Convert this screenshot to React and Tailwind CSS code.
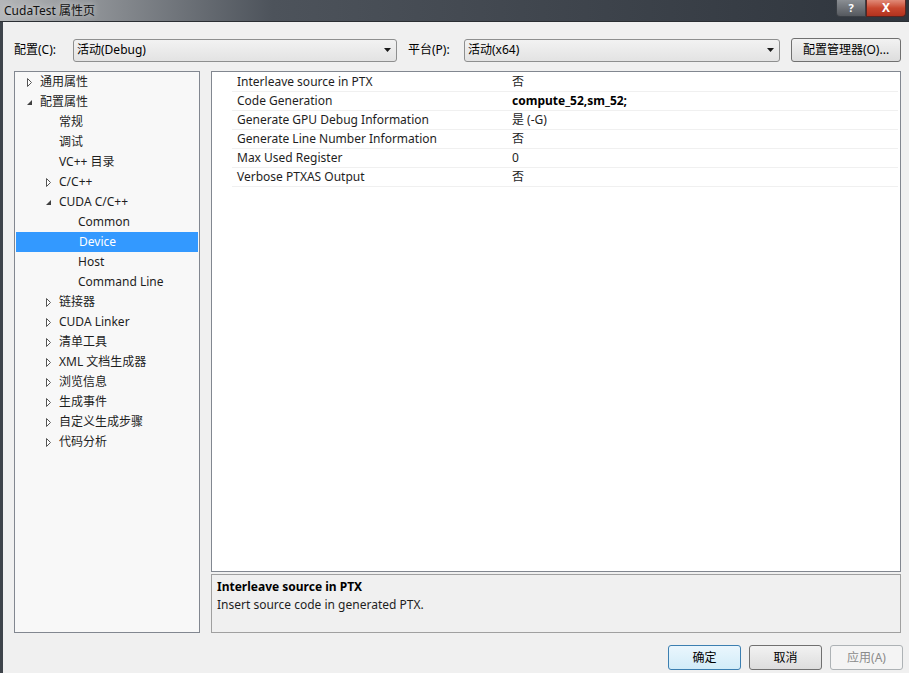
import React from 'react';

const ui = { fontFamily: '"Noto Sans", "Noto Sans CJK SC", sans-serif' };

const tree = [
  { label: '通用属性', level: 0, arrow: 'closed' },
  { label: '配置属性', level: 0, arrow: 'open' },
  { label: '常规', level: 1 },
  { label: '调试', level: 1 },
  { label: 'VC++ 目录', level: 1 },
  { label: 'C/C++', level: 1, arrow: 'closed' },
  { label: 'CUDA C/C++', level: 1, arrow: 'open' },
  { label: 'Common', level: 2 },
  { label: 'Device', level: 2, selected: true },
  { label: 'Host', level: 2 },
  { label: 'Command Line', level: 2 },
  { label: '链接器', level: 1, arrow: 'closed' },
  { label: 'CUDA Linker', level: 1, arrow: 'closed' },
  { label: '清单工具', level: 1, arrow: 'closed' },
  { label: 'XML 文档生成器', level: 1, arrow: 'closed' },
  { label: '浏览信息', level: 1, arrow: 'closed' },
  { label: '生成事件', level: 1, arrow: 'closed' },
  { label: '自定义生成步骤', level: 1, arrow: 'closed' },
  { label: '代码分析', level: 1, arrow: 'closed' },
];

const props = [
  ['Interleave source in PTX', '否'],
  ['Code Generation', 'compute_52,sm_52;', true],
  ['Generate GPU Debug Information', '是 (-G)'],
  ['Generate Line Number Information', '否'],
  ['Max Used Register', '0'],
  ['Verbose PTXAS Output', '否'],
];

const indent = ['pl-[11px]', 'pl-[30px]', 'pl-[49px]'];

function Arrow({ kind }) {
  if (kind === 'open') {
    return (
      <svg width="7" height="9" viewBox="0 0 7 9" className="shrink-0">
        <polygon points="6,2 6,7 1,7" fill="#404040" />
      </svg>
    );
  }
  if (kind === 'closed') {
    return (
      <svg width="7" height="9" viewBox="0 0 7 9" className="shrink-0">
        <polygon points="1.5,0.5 5.5,4.5 1.5,8.5" fill="#fff" stroke="#555" strokeWidth="1" />
      </svg>
    );
  }
  return <span className="w-[7px] shrink-0" />;
}

function Combo({ text, width }) {
  return (
    <div
      className={`${width} h-[23px] flex items-center justify-between rounded-[3px] border border-[#8e8f8f] bg-gradient-to-b from-[#f2f2f2] to-[#e3e3e3] pl-[3px] pr-[5px]`}
    >
      <span className="text-[12px] text-black">{text}</span>
      <svg width="7" height="4" viewBox="0 0 7 4">
        <polygon points="0,0 7,0 3.5,4" fill="#1a1a1a" />
      </svg>
    </div>
  );
}

function Button({ children, focus, disabled }) {
  return (
    <div
      className={`w-[73px] h-[25px] flex items-center justify-center rounded-[3px] border text-[12px] ${
        focus
          ? 'border-[#3c7fb1] bg-gradient-to-b from-[#eaf6fd] to-[#d2ecf8] text-black'
          : disabled
          ? 'border-[#adb2b5] bg-[#f4f4f4] text-[#8b8b8b]'
          : 'border-[#707070] bg-gradient-to-b from-[#f2f2f2] to-[#dddddd] text-black'
      }`}
    >
      {children}
    </div>
  );
}

export default function App() {
  return (
    <div className="w-[909px] h-[673px] flex flex-col overflow-hidden bg-[#f0f0f0]" style={ui}>
      {/* Title bar */}
      <div className="h-[22px] flex items-start bg-gradient-to-r from-[#b4b6b8] via-[#4d535b] via-30% to-[#2f353d] border-b border-[#2a2e33]">
        <span className="pl-[4px] pt-[2px] text-[12px] text-[#111] [text-shadow:0_0_6px_#e8e8e8]">CudaTest 属性页</span>
        <div className="ml-auto mr-[3px] flex">
          <div className="w-[30px] h-[17px] flex items-center justify-center rounded-bl-[4px] border border-t-0 border-[#3a3f45] bg-gradient-to-b from-[#8a8e93] to-[#55595f] text-[11px] font-bold text-white">?</div>
          <div className="w-[40px] h-[17px] flex items-center justify-center rounded-br-[4px] border border-t-0 border-[#5a2420] bg-gradient-to-b from-[#e08a78] via-[#c8472f] to-[#b2321e] text-[12px] font-bold text-white">X</div>
        </div>
      </div>

      {/* Body */}
      <div className="flex-1 flex flex-col border-l-[3px] border-[#3e444b] pl-[11px] pr-[6px] pt-[16px]">
        {/* Config row */}
        <div className="h-[24px] flex items-center text-[12px]">
          <span className="w-[59px]">配置(C):</span>
          <Combo text="活动(Debug)" width="w-[324px]" />
          <span className="ml-[11px] w-[56px]">平台(P):</span>
          <Combo text="活动(x64)" width="w-[316px]" />
          <div className="ml-[11px] w-[110px] h-[24px] flex items-center justify-center rounded-[3px] border border-[#707070] bg-gradient-to-b from-[#f2f2f2] to-[#dddddd]">
            配置管理器(O)...
          </div>
        </div>

        {/* Main area */}
        <div className="mt-[9px] h-[562px] flex gap-[11px]">
          {/* Tree */}
          <div className="w-[186px] border border-[#828790] bg-[#f8f8f8]">
            {tree.map((n) => (
              <div
                key={n.label}
                className={`h-[20px] flex items-center gap-[7px] ${indent[n.level]} text-[12px] ${
                  n.selected ? 'bg-[#3399ff] text-white mx-px' : 'text-[#1e1e1e]'
                }`}
              >
                <Arrow kind={n.arrow} />
                <span>{n.label}</span>
              </div>
            ))}
          </div>

          {/* Right side */}
          <div className="w-[690px] flex flex-col gap-[2px]">
            <div className="h-[501px] border border-[#828790] bg-white pr-[2px] pt-[1px]">
              {props.map(([k, v, bold]) => (
                <div key={k} className="h-[19px] flex items-center border-b border-[#f0f0f0] ml-[20px] text-[12px]">
                  <span className="w-[275px] pl-[5px] text-[#1e1e1e]">{k}</span>
                  <span className={`pl-[5px] ${bold ? 'font-bold text-black' : 'text-[#1e1e1e]'}`}>{v}</span>
                </div>
              ))}
            </div>
            <div className="h-[59px] border border-[#a0a0a0] bg-[#f0f0f0] px-[5px] pt-[3px] text-[12px] leading-[18px]">
              <div className="font-bold text-black">Interleave source in PTX</div>
              <div className="text-[#1e1e1e]">Insert source code in generated PTX.</div>
            </div>
          </div>
        </div>

        {/* Buttons */}
        <div className="mt-[12px] flex justify-end gap-[8px]">
          <Button focus>确定</Button>
          <Button>取消</Button>
          <Button disabled>应用(A)</Button>
        </div>
      </div>
    </div>
  );
}
